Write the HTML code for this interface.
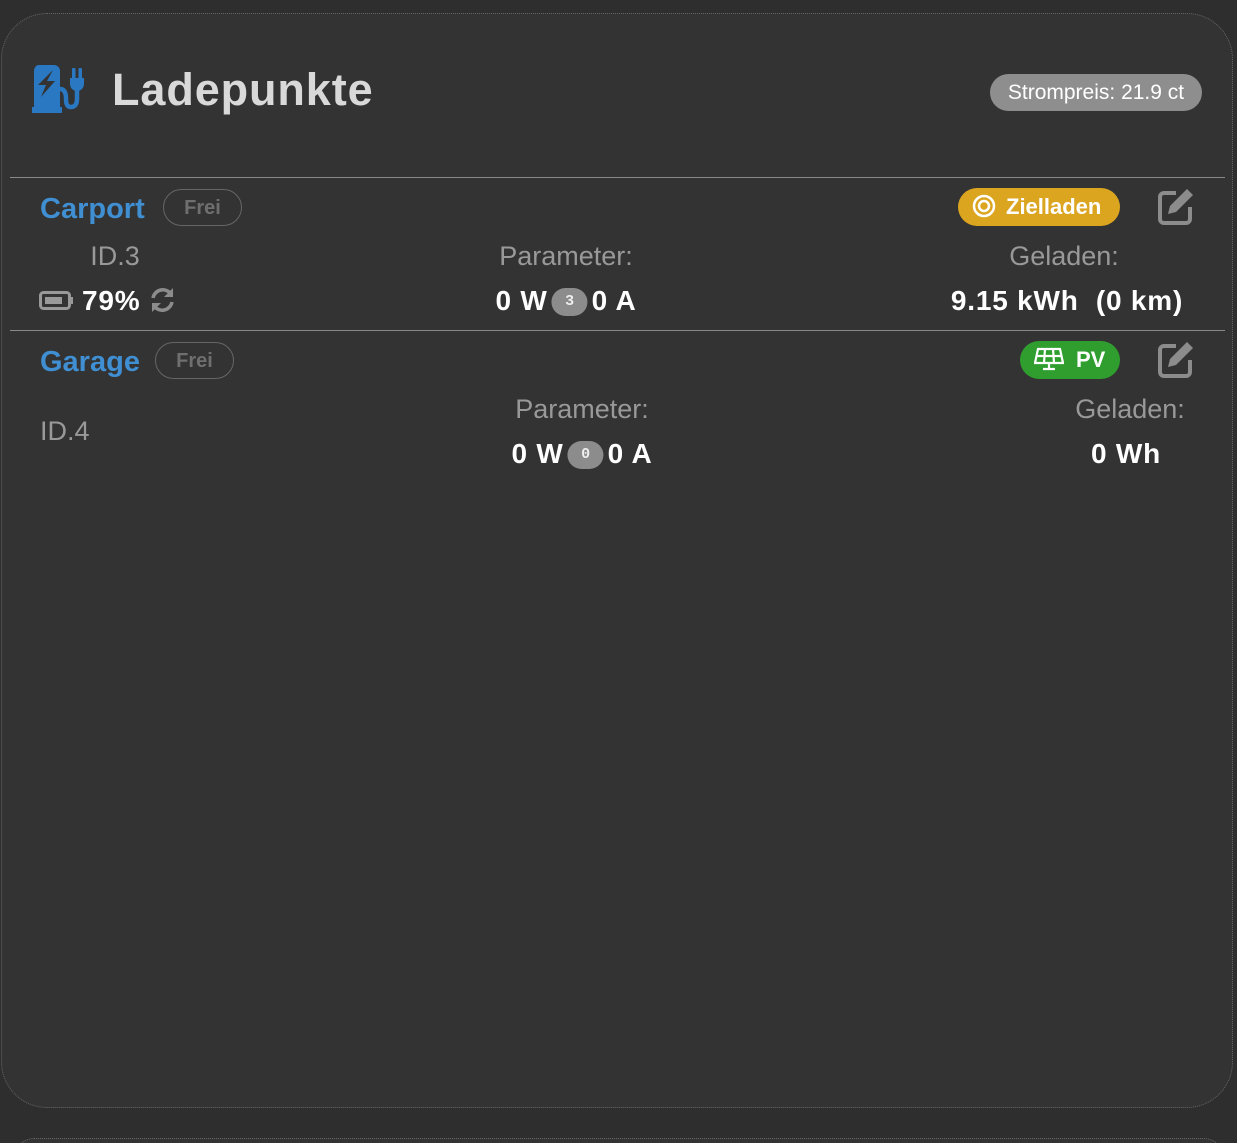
<!DOCTYPE html>
<html><head><meta charset="utf-8"><style>
*{margin:0;padding:0;box-sizing:border-box}
html,body{width:1237px;height:1143px;overflow:hidden}
body{background:#2e2e2e;font-family:"Liberation Sans",sans-serif;position:relative}
.card{position:absolute;left:1px;top:13px;width:1232px;height:1095px;background:#333;border:1px dotted #666;border-radius:46px}
.card2{position:absolute;left:14px;top:1138px;width:1210px;height:40px;background:#333;border:1px dotted #666;border-radius:46px}
.a{position:absolute;white-space:nowrap;line-height:1}
.c{transform:translateX(-50%)}
.hr{position:absolute;left:10px;width:1215px;height:1px;background:#888}
.lbl{font-size:27px;color:#999}
.val{font-size:28px;color:#fff;font-weight:bold;letter-spacing:0.8px}
.name{font-size:29px;color:#3f8fd2;font-weight:bold}
.frei{position:absolute;height:37px;border:1px solid #666;border-radius:19px;color:#6f6f6f;font-weight:bold;font-size:20px;line-height:37px;text-align:center}
.pill{position:absolute;height:38px;border-radius:19px;color:#fff;font-weight:bold;font-size:22px;line-height:38px;white-space:nowrap}
.dot{display:inline-block;width:36px;height:28px;border-radius:14px;background:#8c8c8c;color:#eee;font-size:15px;font-family:"Liberation Mono",monospace;text-align:center;line-height:28px;vertical-align:5px;margin:0 4px;letter-spacing:0}
</style></head><body>
<div class="card"></div>
<div class="card2"></div>
<svg class="a" style="left:31px;top:64px" width="56" height="50" viewBox="0 0 56 50">
<path d="M7 1h16a6 6 0 0 1 6 6v36h2v6H1v-6h2V7a6 6 0 0 1 4-6z" fill="#2a78c2"/>
<path d="M22 6L7 21h8l-5 12 14-16h-8l6-11z" fill="#333"/>
<path d="M29 25c5 0 6 5 6 10s1 8 5 8 6-3 6-8V26" fill="none" stroke="#2a78c2" stroke-width="4.5"/>
<path d="M39 14h14v6a7 7 0 0 1-14 0z" fill="#2a78c2"/>
<rect x="41" y="4" width="3.5" height="11" rx="1" fill="#2a78c2"/><rect x="47.5" y="4" width="3.5" height="11" rx="1" fill="#2a78c2"/>
</svg>
<div class="a" style="left:112px;top:67px;font-size:45px;font-weight:bold;color:#d9d9d9;letter-spacing:0.9px">Ladepunkte</div>
<div class="pill" style="left:990px;top:74px;height:37px;width:212px;background:#8e8e8e;font-weight:normal;font-size:21px;line-height:37px;text-align:center;color:#fff">Strompreis: 21.9 ct</div>
<div class="hr" style="top:177px"></div>
<div class="a name" style="left:40px;top:195px">Carport</div>
<div class="frei" style="left:163px;top:189px;width:79px">Frei</div>
<div class="pill" style="left:958px;top:188px;width:162px;background:#dba520;padding-left:14px">
<svg width="24" height="24" viewBox="0 0 24 24" style="vertical-align:-4px;margin-right:10px"><circle cx="12" cy="12" r="10" fill="none" stroke="#fff" stroke-width="2.5"/><circle cx="12" cy="12" r="5" fill="none" stroke="#fff" stroke-width="2.5"/></svg>Zielladen</div>
<svg class="a" style="left:1156px;top:187px" width="40" height="40" viewBox="0 0 40 40"><path d="M20 6H8a4 4 0 0 0-4 4v22a4 4 0 0 0 4 4h22a4 4 0 0 0 4-4V20" fill="none" stroke="#8c8c8c" stroke-width="4"/><path d="M31 2l6 6-17 17-8 2 2-8z" fill="#8c8c8c"/></svg>
<div class="a lbl c" style="left:115px;top:243px">ID.3</div>
<svg class="a" style="left:39px;top:291px" width="35" height="19" viewBox="0 0 35 19"><rect x="1.5" y="1.5" width="29" height="16" rx="3" fill="none" stroke="#999" stroke-width="3"/><rect x="6" y="6" width="17" height="7" fill="#999"/><rect x="31" y="6" width="3" height="7" fill="#999"/></svg>
<div class="a val" style="left:82px;top:287px">79%</div>
<svg class="a" style="left:149px;top:287px" width="27" height="26" viewBox="0 0 27 26"><path d="M4 11a10 10 0 0 1 18-4M23 15a10 10 0 0 1-18 4" fill="none" stroke="#8c8c8c" stroke-width="3.5"/><path d="M24 1v9h-9z" fill="#8c8c8c"/><path d="M3 25v-9h9z" fill="#8c8c8c"/></svg>
<div class="a lbl c" style="left:566px;top:243px">Parameter:</div>
<div class="a val c" style="left:566px;top:287px">0 W<span class="dot">3</span>0 A</div>
<div class="a lbl c" style="left:1064px;top:243px">Geladen:</div>
<div class="a val c" style="left:1067px;top:287px">9.15 kWh&nbsp; (0 km)</div>
<div class="hr" style="top:330px"></div>
<div class="a name" style="left:40px;top:348px">Garage</div>
<div class="frei" style="left:155px;top:342px;width:79px">Frei</div>
<div class="pill" style="left:1020px;top:341px;width:100px;background:#2f9e2f;padding-left:14px">
<svg width="30" height="24" viewBox="0 0 30 24" style="vertical-align:-4px;margin-right:12px"><path d="M4 2h22l3 14H1z" fill="none" stroke="#fff" stroke-width="2.2"/><path d="M2.5 9h25M11 2l-1 14M19 2l1 14M15 16v5M9 22h12" stroke="#fff" stroke-width="2.2" fill="none"/></svg>PV</div>
<svg class="a" style="left:1156px;top:340px" width="40" height="40" viewBox="0 0 40 40"><path d="M20 6H8a4 4 0 0 0-4 4v22a4 4 0 0 0 4 4h22a4 4 0 0 0 4-4V20" fill="none" stroke="#8c8c8c" stroke-width="4"/><path d="M31 2l6 6-17 17-8 2 2-8z" fill="#8c8c8c"/></svg>
<div class="a lbl" style="left:40px;top:418px">ID.4</div>
<div class="a lbl c" style="left:582px;top:396px">Parameter:</div>
<div class="a val c" style="left:582px;top:440px">0 W<span class="dot">0</span>0 A</div>
<div class="a lbl c" style="left:1130px;top:396px">Geladen:</div>
<div class="a val c" style="left:1126px;top:440px">0 Wh</div>
</body></html>
